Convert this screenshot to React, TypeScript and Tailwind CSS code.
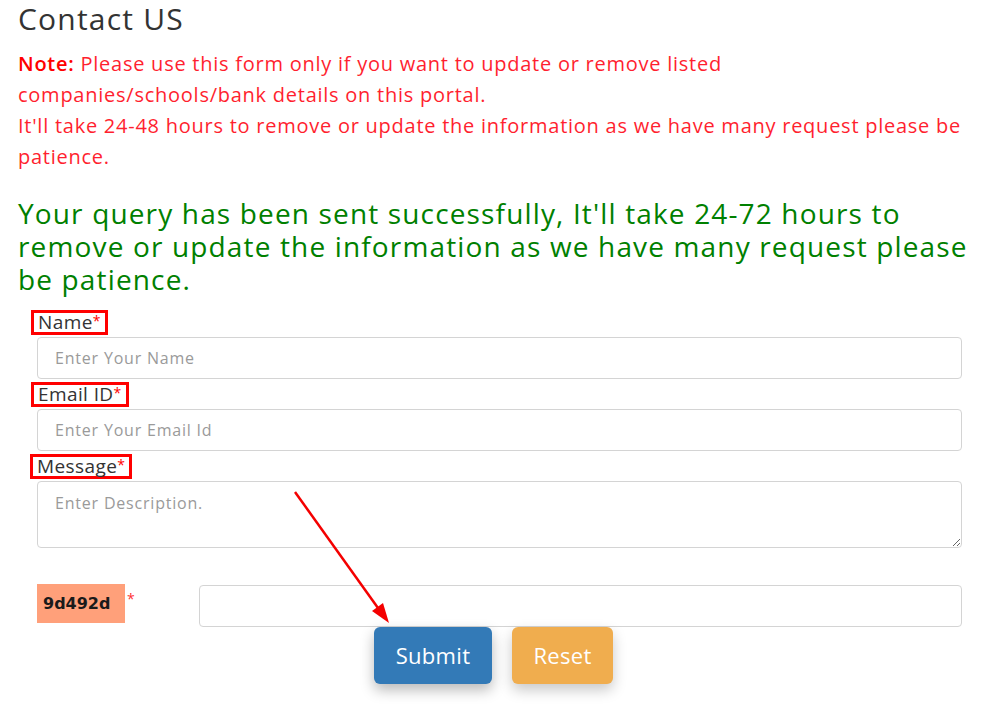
import React from 'react';

const Label: React.FC<{ text: string; className?: string }> = ({ text, className = '' }) => (
    <div className={`inline-flex h-[25px] items-center border-[3px] border-[#ff0000] px-[4px] text-[19px] font-medium leading-none tracking-[0.4px] text-[#333] ${className}`}>
        {text}
        <span className="text-[#ff0000] text-[14px] self-start mt-[1px]">*</span>
    </div>
);

const inputClass =
    'block h-[42px] w-[925px] ml-[19px] rounded-[4px] border border-[#d4d4d4] bg-white px-[17px] text-[16px] tracking-[0.8px] text-[#555] placeholder:text-[#9a9a9a] outline-none';

const App: React.FC = () => {
    return (
        <div className="relative w-[1001px] min-h-[716px] bg-white pl-[18px] pr-[19px] font-['Open_Sans',sans-serif]">
            <h2 className="pt-[1px] text-[30px] leading-[36px] tracking-[1.2px] text-[#333]">Contact US</h2>

            <p className="mt-[11px] text-[20px] leading-[31px] tracking-[0.75px] text-[#ff1f2f]">
                <span className="font-semibold text-[#ff0000]">Note:</span> Please use this form only if you want to update or remove listed
                <br />
                companies/schools/bank details on this portal.
                <br />
                It'll take 24-48 hours to remove or update the information as we have many request please be
                <br />
                patience.
            </p>

            <h3 className="mt-[25px] text-[28px] font-medium leading-[33px] tracking-[1.15px] text-[#008000]">
                Your query has been sent successfully, It'll take 24-72 hours to
                <br />
                remove or update the information as we have many request please
                <br />
                be patience.
            </h3>

            {/* Form */}
            <form className="mt-[14px]" onSubmit={(e) => e.preventDefault()}>
                <Label text="Name" className="ml-[13px]" />
                <input className={`${inputClass} mt-[2px]`} placeholder="Enter Your Name" />

                <Label text="Email ID" className="ml-[13px] mt-[3px]" />
                <input className={`${inputClass} mt-[2px]`} placeholder="Enter Your Email Id" />

                <Label text="Message" className="ml-[12px] mt-[3px]" />
                <textarea
                    className="block h-[67px] w-[925px] ml-[19px] mt-[2px] rounded-[4px] border border-[#d4d4d4] bg-white px-[17px] pt-[9px] text-[16px] tracking-[0.8px] text-[#555] placeholder:text-[#9a9a9a] outline-none"
                    placeholder="Enter Description."
                />

                <div className="mt-[36px] flex items-start">
                    <div className="ml-[19px] flex h-[39px] w-[88px] items-center bg-[#ffa07a] pl-[6px] font-['DejaVu_Sans',sans-serif] text-[16px] font-semibold text-[#1a1a1a]">
                        9d492d
                    </div>
                    <span className="ml-[2px] mt-[8px] text-[14px] leading-none text-[#ff3333]">*</span>
                    <input className="ml-[64px] mt-[1px] block h-[42px] w-[763px] rounded-[4px] border border-[#d4d4d4] bg-white px-[12px] text-[16px] outline-none" />
                </div>

                <div className="ml-[356px] flex gap-[20px]">
                    <button className="h-[57px] w-[118px] rounded-[6px] bg-[#337ab7] text-[22px] tracking-[0.3px] text-white shadow-[0_6px_14px_rgba(0,0,0,0.28)]">
                        Submit
                    </button>
                    <button type="reset" className="h-[57px] w-[101px] rounded-[6px] bg-[#f0ad4e] text-[22px] tracking-[0.3px] text-white shadow-[0_6px_14px_rgba(0,0,0,0.22)]">
                        Reset
                    </button>
                </div>
            </form>

            {/* annotation arrow */}
            <svg className="pointer-events-none absolute left-0 top-0" width="1001" height="716">
                <line x1="295" y1="492" x2="378" y2="608" stroke="#f40000" strokeWidth="2.5" />
                <polygon points="389,623 372,611 383,603" fill="#f40000" />
            </svg>
        </div>
    );
};

export default App;
